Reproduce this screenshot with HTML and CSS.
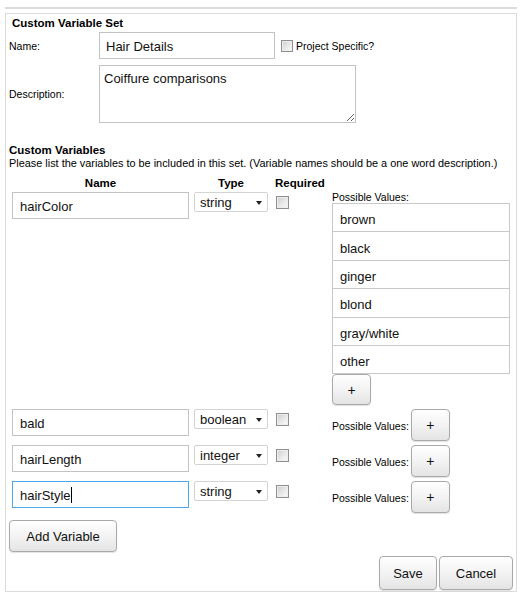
FILE: index.html
```html
<!DOCTYPE html>
<html>
<head>
<meta charset="utf-8">
<title>Custom Variable Set</title>
<link rel="stylesheet" href="styles.css">
</head>
<body>
<div class="page">
  <div class="topline"></div>
  <div class="panel">
    <h2 class="set-title">Custom Variable Set</h2>
    <div class="field-row">
      <label class="field-label">Name:</label>
      <input class="text-input name-input" type="text" value="Hair Details">
      <input class="check project-check" type="checkbox">
      <span class="check-label">Project Specific?</span>
    </div>
    <div class="field-row desc-row">
      <label class="field-label">Description:</label>
      <textarea class="desc-input">Coiffure comparisons</textarea>
    </div>

    <h3 class="vars-title">Custom Variables</h3>
    <p class="vars-help">Please list the variables to be included in this set. (Variable names should be a one word description.)</p>

    <div class="vars-grid vars-head">
      <div class="head head-name">Name</div>
      <div class="head head-type">Type</div>
      <div class="head head-req">Required</div>
      <div></div>
    </div>

    <div class="vars-grid vars-body">
      <input class="text-input var-name" type="text" value="hairColor">
      <div class="select-wrap"><select class="type-select"><option>string</option></select></div>
      <div class="req-cell"><input class="check" type="checkbox"></div>
      <div class="values-cell">
        <div class="values-label">Possible Values:</div>
        <div class="values-list">
          <div class="value-item">brown</div>
          <div class="value-item">black</div>
          <div class="value-item">ginger</div>
          <div class="value-item">blond</div>
          <div class="value-item">gray/white</div>
          <div class="value-item">other</div>
        </div>
        <button class="btn plus-btn list-plus">+</button>
      </div>

      <input class="text-input var-name" type="text" value="bald">
      <div class="select-wrap"><select class="type-select"><option>boolean</option></select></div>
      <div class="req-cell"><input class="check" type="checkbox"></div>
      <div class="values-cell inline-values">
        <span class="values-label">Possible Values:</span>
        <button class="btn plus-btn">+</button>
      </div>

      <input class="text-input var-name" type="text" value="hairLength">
      <div class="select-wrap"><select class="type-select"><option>integer</option></select></div>
      <div class="req-cell"><input class="check" type="checkbox"></div>
      <div class="values-cell inline-values">
        <span class="values-label">Possible Values:</span>
        <button class="btn plus-btn">+</button>
      </div>

      <div class="focus-wrap">
        <input class="text-input var-name focused" type="text" value="hairStyle">
        <span class="caret"></span>
      </div>
      <div class="select-wrap"><select class="type-select"><option>string</option></select></div>
      <div class="req-cell"><input class="check" type="checkbox"></div>
      <div class="values-cell inline-values">
        <span class="values-label">Possible Values:</span>
        <button class="btn plus-btn">+</button>
      </div>
    </div>

    <button class="btn add-btn">Add Variable</button>

    <div class="footer">
      <button class="btn save-btn">Save</button>
      <button class="btn cancel-btn">Cancel</button>
    </div>
  </div>
  <a class="below-link" href="#">Add new custom variable set</a>
</div>
</body>
</html>
```

FILE: styles.css
```css
html, body {
  margin: 0;
  padding: 0;
  background: #ffffff;
}

body {
  font-family: "Liberation Sans", Arial, sans-serif;
  color: #000;
  width: 522px;
  height: 595px;
  overflow: hidden;
}

.page {
  padding: 0 5px;
}

.topline {
  margin-top: 7px;
  height: 2px;
  background: #dcdcdc;
}

.panel {
  margin-top: 4px;
  border: 1px solid #dcdcdc;
  padding: 0 3px 1px 3px;
}

.set-title {
  margin: 0;
  padding: 2px 0 0 3px;
  font-size: 11.5px;
  line-height: 14px;
  font-weight: bold;
}

.field-row {
  display: flex;
  align-items: center;
  margin-top: 2px;
}

.desc-row {
  margin-top: 6px;
}

.field-label {
  width: 90px;
  font-size: 10.5px;
  flex: none;
}

.text-input {
  box-sizing: border-box;
  border: 1px solid #c3c3c3;
  border-radius: 0;
  font-family: "Liberation Sans", Arial, sans-serif;
  font-size: 13px;
  color: #111;
  background: #fff;
  outline: none;
  margin: 0;
}

.name-input {
  width: 176px;
  height: 27px;
  padding: 2px 6px 0 6px;
}

.check {
  -webkit-appearance: none;
  appearance: none;
  box-sizing: border-box;
  width: 13px;
  height: 13px;
  margin: 0;
  border: 1px solid #8e8f8f;
  border-radius: 0;
  background: linear-gradient(135deg, #cdcdcd 0%, #e9e9e9 55%, #fbfbfb 100%);
  box-shadow: inset 0 0 0 1px #eeeeee;
}

.project-check {
  width: 12px;
  height: 12px;
  margin-left: 6px;
}

.check-label {
  margin-left: 3px;
  font-size: 10.5px;
}

.desc-input {
  box-sizing: border-box;
  width: 257px;
  height: 58px;
  margin: 0;
  padding: 5px 4px;
  border: 1px solid #c3c3c3;
  font-family: "Liberation Sans", Arial, sans-serif;
  font-size: 13px;
  color: #111;
  outline: none;
  resize: both;
}

.vars-title {
  margin: 20px 0 0 0;
  font-size: 11.5px;
  line-height: 14px;
  font-weight: bold;
}

.vars-help {
  margin: 0;
  font-size: 10.9px;
  line-height: 13px;
  white-space: nowrap;
}

.vars-grid {
  display: grid;
  grid-template-columns: 182px 82px 56px 178px;
  padding-left: 3px;
}

.vars-head {
  margin-top: 6px;
  font-size: 11.5px;
  line-height: 14px;
  font-weight: bold;
}

.head-name {
  width: 177px;
  text-align: center;
}

.head-type {
  width: 74px;
  text-align: center;
}

.head-req {
  margin-left: -1px;
}

.vars-body {
  margin-top: 2px;
  row-gap: 4px;
  align-items: start;
}

.var-name {
  width: 177px;
  height: 27px;
  padding: 2px 7px 0 7px;
}

.focused {
  border-color: #4ea9ea;
}

.focus-wrap {
  position: relative;
  width: 177px;
  height: 27px;
}

.caret {
  position: absolute;
  left: 59px;
  top: 6px;
  width: 1px;
  height: 16px;
  background: #000;
}

.select-wrap {
  position: relative;
  width: 74px;
  height: 20px;
}

.select-wrap::after {
  content: "";
  position: absolute;
  right: 6px;
  top: 9px;
  border-left: 3.5px solid transparent;
  border-right: 3.5px solid transparent;
  border-top: 4px solid #222;
}

.type-select {
  -webkit-appearance: none;
  appearance: none;
  box-sizing: border-box;
  width: 74px;
  height: 20px;
  margin: 0;
  padding: 0 0 0 5px;
  border: 1px solid #d3d3d3;
  border-radius: 2px;
  background: #fff;
  font-family: "Liberation Sans", Arial, sans-serif;
  font-size: 13px;
  color: #111;
  outline: none;
}

.req-cell {
  padding-top: 3px;
  height: 13px;
}

.values-label {
  font-size: 10.5px;
  line-height: 11px;
}

.values-list {
  width: 178px;
}

.value-item {
  box-sizing: border-box;
  height: 29.4px;
  margin-top: -1px;
  border: 1px solid #c9c9c9;
  padding: 4px 0 0 7px;
  display: flex;
  align-items: center;
  font-size: 13px;
  color: #111;
}

.value-item:first-child {
  margin-top: 0;
}

.btn {
  box-sizing: border-box;
  margin: 0;
  border: 1px solid #a9a9a9;
  border-radius: 4px;
  background: linear-gradient(#ffffff 0%, #f3f3f3 50%, #e4e4e4 100%);
  box-shadow: 0 1px 1px rgba(0, 0, 0, 0.12);
  font-family: "Liberation Sans", Arial, sans-serif;
  font-size: 13px;
  color: #111;
  padding: 0;
  cursor: pointer;
}

.plus-btn {
  width: 39px;
  height: 32px;
  font-size: 14px;
}

.list-plus {
  display: block;
  height: 31px;
}

.inline-values {
  display: flex;
  align-items: baseline;
}

.inline-values .values-label {
  line-height: 13px;
}

.inline-values .plus-btn {
  margin-left: 2px;
}

.add-btn {
  display: block;
  margin-top: 7px;
  width: 108px;
  height: 32px;
}

.footer {
  display: flex;
  justify-content: flex-end;
  gap: 2px;
  margin-top: 4px;
}

.save-btn {
  width: 58px;
  height: 34px;
}

.cancel-btn {
  width: 74px;
  height: 34px;
}

.below-link {
  display: block;
  margin-top: 1px;
  padding-left: 3px;
  font-size: 11px;
  color: #3b3bd6;
  text-decoration: none;
}
```
